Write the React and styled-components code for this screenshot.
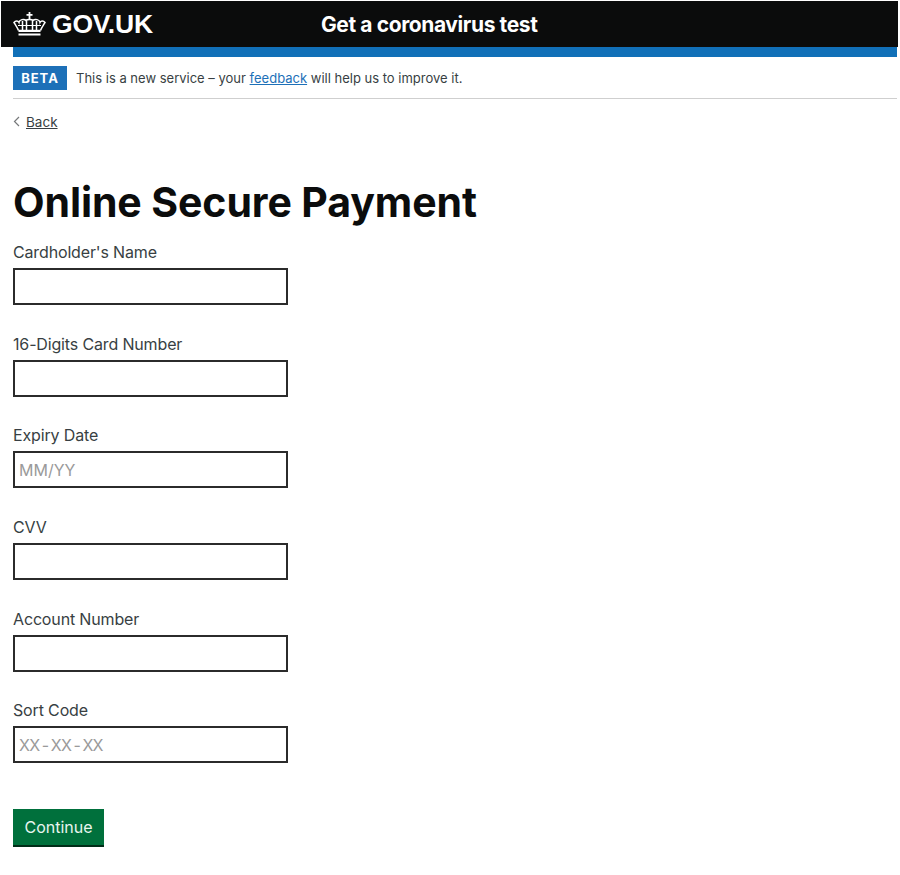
import React from 'react';
import styled, { createGlobalStyle } from 'styled-components';

const GlobalStyle = createGlobalStyle`
  html, body {
    margin: 0;
    padding: 0;
    background: #fff;
    color: #0b0c0c;
    font-family: Inter, 'Noto Sans', 'Liberation Sans', Arial, sans-serif;
  }
`;

const Page = styled.div`
  width: 900px;
  height: 875px;
  padding-top: 1px;
  box-sizing: border-box;
  overflow: hidden;
`;

const Header = styled.header`
  display: flex;
  align-items: center;
  height: 46px;
  margin: 0 2px 0 1px;
  background: #0b0c0c;
  color: #fff;
`;

const Logo = styled.div`
  display: flex;
  align-items: center;
  gap: 6px;
  width: 320px;
  padding-left: 12px;
  box-sizing: border-box;
  font-family: 'Liberation Sans', Arial, sans-serif;
  font-size: 26.5px;
  font-weight: 700;
  letter-spacing: -0.2px;
`;

const ServiceName = styled.div`
  font-size: 21px;
  font-weight: 700;
  letter-spacing: -0.4px;
`;

const Main = styled.main`
  margin: 0 3px 0 13px;
`;

const BlueBar = styled.div`
  height: 10px;
  background: #1170b8;
`;

const PhaseBanner = styled.div`
  display: flex;
  align-items: center;
  gap: 9px;
  height: 41px;
  border-bottom: 1px solid #cfcfcf;
  font-size: 13px;
  color: #383f43;
`;

const Tag = styled.strong`
  display: flex;
  align-items: center;
  justify-content: center;
  width: 54px;
  height: 24px;
  background: #1d70b8;
  color: #fff;
  font-size: 13px;
  font-weight: 700;
  letter-spacing: 1px;
`;

const FeedbackLink = styled.a`
  color: #1d70b8;
  text-decoration: underline;
`;

const BackLink = styled.a`
  display: flex;
  align-items: center;
  gap: 6px;
  margin-top: 14px;
  height: 17px;
  font-size: 13.5px;
  color: #383f43;
  text-decoration: none;

  span {
    text-decoration: underline;
  }
`;

const Title = styled.h1`
  margin: 47px 0 0;
  font-size: 41px;
  line-height: 50px;
  font-weight: 700;
  letter-spacing: -0.1px;
  color: #0b0c0c;
`;

const Form = styled.form`
  display: flex;
  flex-direction: column;
  align-items: flex-start;
  margin-top: 15px;
`;

const Field = styled.div`
  display: flex;
  flex-direction: column;
  gap: 6px;
  height: 91.7px;
`;

const Label = styled.label`
  font-size: 16px;
  line-height: 20px;
  color: #383f43;
  letter-spacing: -0.15px;
`;

const Input = styled.input`
  width: 275px;
  height: 37px;
  box-sizing: border-box;
  padding: 0 4px;
  border: 2px solid #2b2b2b;
  border-radius: 0;
  outline: none;
  background: #fff;
  font-family: inherit;
  font-size: 16px;

  &::placeholder {
    color: #9a9a9a;
    opacity: 1;
    letter-spacing: ${({ $tight }) => ($tight ? '-0.7px' : 'normal')};
    word-spacing: ${({ $tight }) => ($tight ? '-1.5px' : 'normal')};
  }
`;

const Button = styled.button`
  width: 91px;
  height: 36px;
  margin-top: 17px;
  padding: 0;
  border: 0;
  border-radius: 0;
  background: #00703c;
  box-shadow: 0 2px 0 #002d18;
  color: #e8f5ee;
  font-family: inherit;
  font-size: 16px;
`;

const Crown = () => (
  <svg width="33" height="24" viewBox="0 0 33 24" fill="none" stroke="#fff" strokeWidth="1.5" aria-hidden="true">
    <path d="M16.500 0v7M13.500 2.800h6" strokeWidth="1.800" />
    <path d="M5.500 18.500C4.500 15.500 2.500 13 1 10.500c1.500-2 4-2 5 0 .5-3 5-4 7-2 1-1.500 6-1.500 7 0 2-2 6.500-1 7 2 1-2 3.500-2 5 0-1.500 2.500-3.500 5-4.500 8" />
    <path d="M9.500 9v9M13.500 8.500V18M19.500 8.500V18M23.500 9v9" />
    <path d="M5 13.500h23" strokeWidth="1" />
    <path d="M5.500 18.800h22M5.500 22.500h22" strokeWidth="2.200" />
  </svg>
);

const Chevron = () => (
  <svg width="7" height="11" viewBox="0 0 7 11" fill="none" stroke="#77797b" strokeWidth="1.2" aria-hidden="true">
    <path d="M6 1 1.500 5.500 6 10" />
  </svg>
);

const fields = [
  { label: "Cardholder's Name" },
  { label: '16-Digits Card Number' },
  { label: 'Expiry Date', placeholder: 'MM/YY' },
  { label: 'CVV' },
  { label: 'Account Number' },
  { label: 'Sort Code', placeholder: 'XX - XX - XX', tight: true },
];

const App = () => (
  <Page>
    <GlobalStyle />
    <Header>
      <Logo>
        <Crown />
        GOV.UK
      </Logo>
      <ServiceName>Get a coronavirus test</ServiceName>
    </Header>
    <Main>
      <BlueBar />
      <PhaseBanner>
        <Tag>BETA</Tag>
        <span>
          This is a new service – your <FeedbackLink href="#">feedback</FeedbackLink> will help us to improve it.
        </span>
      </PhaseBanner>
      <BackLink href="#">
        <Chevron />
        <span>Back</span>
      </BackLink>
      <Title>Online Secure Payment</Title>
      <Form>
        {fields.map((field) => (
          <Field key={field.label}>
            <Label>{field.label}</Label>
            <Input placeholder={field.placeholder} $tight={field.tight} />
          </Field>
        ))}
        <Button type="button">Continue</Button>
      </Form>
    </Main>
  </Page>
);

export default App;
